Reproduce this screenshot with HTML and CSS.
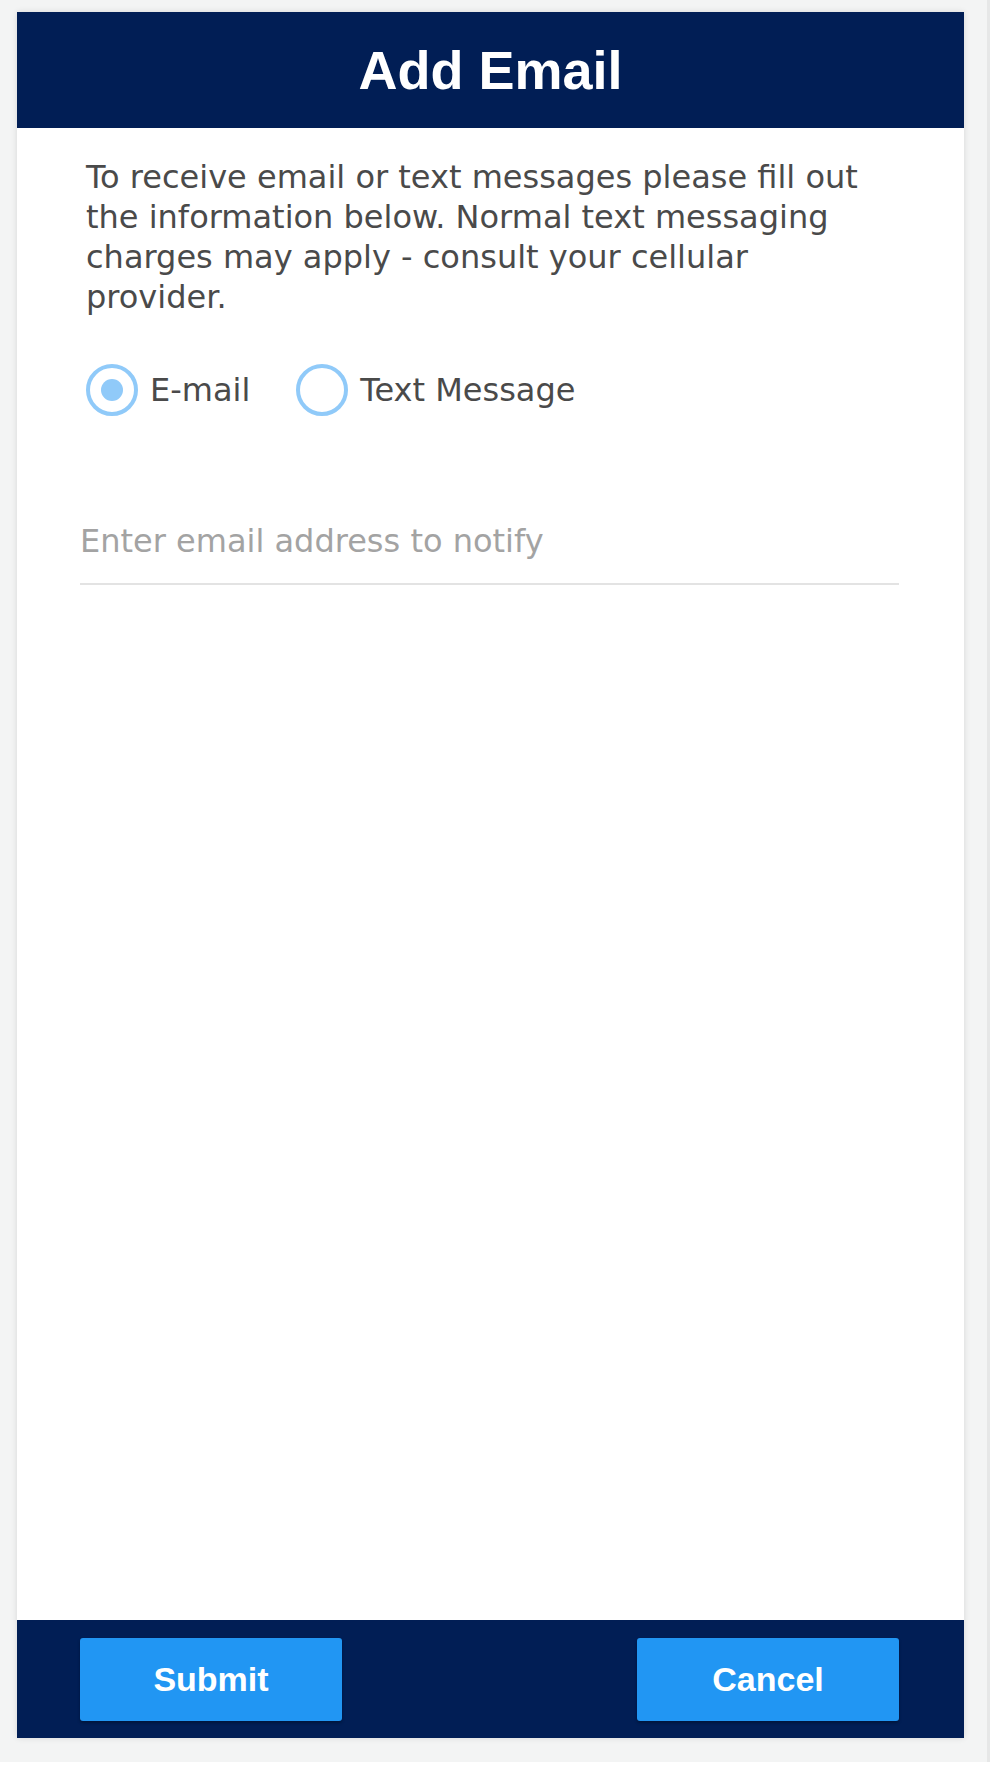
FILE: index.html
```html
<!DOCTYPE html>
<html lang="en">
<head>
    <meta charset="UTF-8">
    <meta name="viewport" content="width=device-width, initial-scale=1.0">
    <title>Add Email</title>
    <link rel="stylesheet" href="styles.css">
</head>
<body>
    <div class="page">
        <div class="dialog">
            <div class="dialog-header">
                <h1>Add Email</h1>
            </div>

            <div class="dialog-body">
                <p class="intro">To receive email or text messages please fill out the information below. Normal text messaging charges may apply - consult your cellular provider.</p>

                <div class="radio-row">
                    <label class="radio-option">
                        <input type="radio" name="notify-type" value="email" checked>
                        <span class="radio-mark"></span>
                        <span class="radio-text">E-mail</span>
                    </label>
                    <label class="radio-option">
                        <input type="radio" name="notify-type" value="text">
                        <span class="radio-mark"></span>
                        <span class="radio-text">Text Message</span>
                    </label>
                </div>

                <div class="field">
                    <input type="email" class="field-input" placeholder="Enter email address to notify">
                </div>
            </div>

            <div class="dialog-footer">
                <button class="btn" type="button">Submit</button>
                <button class="btn" type="button">Cancel</button>
            </div>
        </div>
    </div>
</body>
</html>
```

FILE: styles.css
```css
body {
    margin: 0;
    background: #ffffff;
    font-family: "DejaVu Sans", Verdana, sans-serif;
}
.page {
    width: 990px;
    height: 1762px;
    box-sizing: border-box;
    padding: 12px 23px 24px 17px;
    background: #f3f4f4;
    border-right: 3px solid #e6e7e7;
}
.dialog {
    height: 100%;
    display: flex;
    flex-direction: column;
    background: #ffffff;
    box-shadow: 0 0 6px rgba(0,0,0,0.12);
}
.dialog-header {
    height: 116px;
    display: flex;
    align-items: center;
    justify-content: center;
    background: #011e55;
}
.dialog-header h1 {
    margin: 0;
    color: #ffffff;
    font-family: "Liberation Sans", Arial, sans-serif;
    font-weight: bold;
    font-size: 54px;
}
.dialog-body {
    flex: 1;
    padding: 29px 65px 0 63px;
}
.intro {
    margin: 0;
    padding: 0 6px;
    color: #4a4a4a;
    font-size: 32px;
    line-height: 40px;
}
.radio-row {
    display: flex;
    gap: 46px;
    margin-top: 47px;
    padding-left: 6px;
}
.radio-option {
    display: flex;
    align-items: center;
    gap: 12px;
    color: #4a4a4a;
    font-size: 32px;
    cursor: pointer;
}
.radio-option input {
    display: none;
}
.radio-mark {
    width: 44px;
    height: 44px;
    border: 4px solid #90caf9;
    border-radius: 50%;
    display: flex;
    align-items: center;
    justify-content: center;
}
.radio-option input:checked + .radio-mark::after {
    content: "";
    width: 22px;
    height: 22px;
    border-radius: 50%;
    background: #90caf9;
}
.field {
    margin-top: 91px;
}
.field-input {
    width: 100%;
    box-sizing: border-box;
    height: 78px;
    border: none;
    border-bottom: 2px solid #e3e3e3;
    padding: 0 0 8px;
    font-family: "DejaVu Sans", Verdana, sans-serif;
    font-size: 32px;
    color: #333;
    outline: none;
}
.field-input::placeholder {
    color: #a3a3a3;
}
.dialog-footer {
    height: 118px;
    display: flex;
    align-items: center;
    justify-content: space-between;
    padding: 0 65px 0 63px;
    background: #011e55;
}
.btn {
    width: 262px;
    height: 83px;
    border: none;
    border-radius: 3px;
    background: #2196f3;
    color: #ffffff;
    font-family: "Liberation Sans", Arial, sans-serif;
    font-weight: bold;
    font-size: 34px;
    box-shadow: 0 2px 3px rgba(0,0,0,0.3);
}
```
